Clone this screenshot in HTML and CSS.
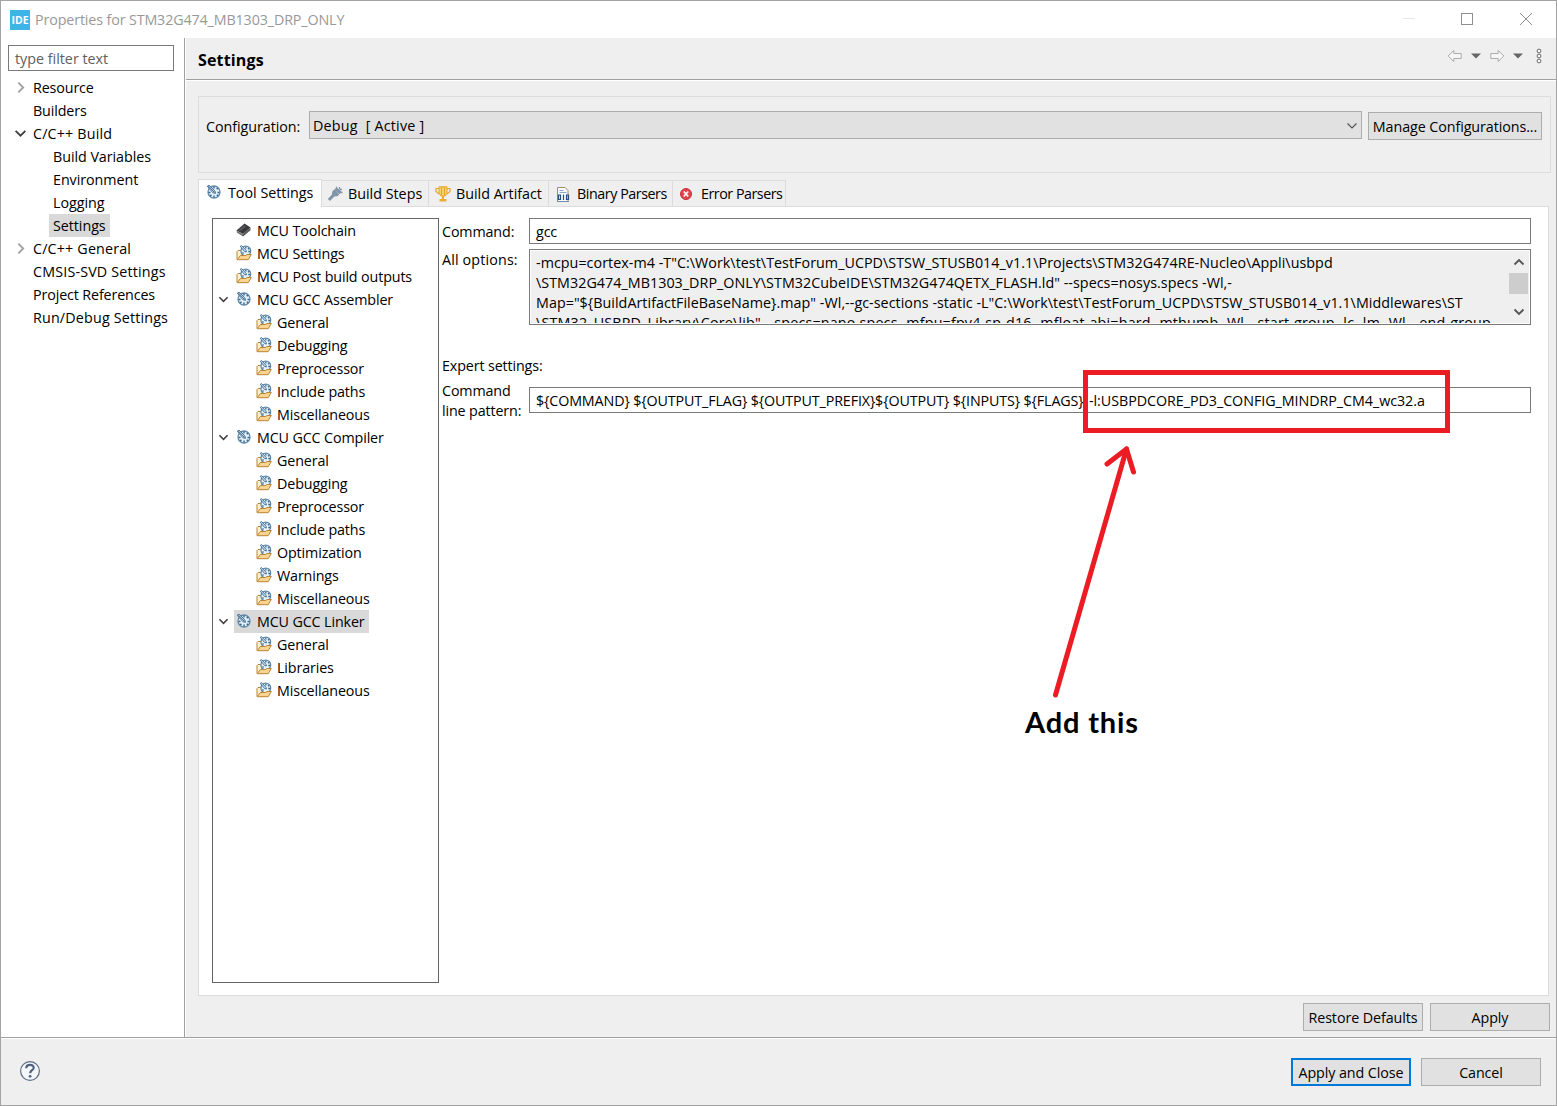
FILE: index.html
```html
<!DOCTYPE html>
<html lang="en">
<head>
    <meta charset="UTF-8">
    <title>Properties for STM32G474_MB1303_DRP_ONLY</title>
    <link rel="stylesheet" href="styles.css">
</head>
<body>
    <!-- shared icons -->
    <svg class="sprite" width="0" height="0">
        <symbol id="dial" viewBox="0 0 16 16">
            <circle cx="8" cy="8" r="6" fill="#e6f1f9" stroke="#6389ab" stroke-width="1.3"/>
            <path d="M8 2.500v2M8 11.500v2M2.500 8.500h2M11.500 8.500h2M4.200 12l1.300-1.300M10.800 10.800l1.300 1.200M10.700 5.300L12 4" stroke="#34668f" stroke-width="1.400"/>
            <path d="M1.300 2.200l5.500 6.500 2.700.7-.7-2.700L3 1.200z" fill="#dbe8f1" stroke="#34668f" stroke-width=".9"/>
            <path d="M2.500 2.200l6 6.200" stroke="#28517a" stroke-width=".9"/>
        </symbol>
        <symbol id="folder" viewBox="0 0 16 16">
            <path d="M1 14.500V6.500L2 5.500h2.500l1.500 1.600v2.400" fill="#fdf1cf" stroke="#b98535"/>
            <circle cx="9.800" cy="6" r="4.900" fill="#e6f1f9" stroke="#5b84a8" stroke-width="1.200"/>
            <path d="M9.800 2v1.500M12 4.200l1-1M12.300 6.500H14M6.500 8.500l1-1" stroke="#34668f" stroke-width="1.300"/>
            <path d="M4.300 1.300l4.300 5.200 1.800.5-.4-1.700L5.500.6z" fill="#dbe8f1" stroke="#34668f" stroke-width=".9"/>
            <path d="M1.200 14.700l3.200-4.200h5.100l1.500-1h4.300l-3.100 5.200z" fill="#fbd490" stroke="#b98535"/>
        </symbol>
        <symbol id="chip" viewBox="0 0 16 16">
            <path d="M.5 8.500L8.500 1.500l6 4L7 12z" fill="#39393b"/>
            <path d="M.5 8.500L7 12v2.500L1 10.800z" fill="#777"/>
            <path d="M7 12l7.500-6.500v2.800L7 14.500z" fill="#555"/>
            <path d="M2.500 8.300l6-5.100 1.600 1L4 9.300z" fill="#59595c"/>
        </symbol>
        <symbol id="open" viewBox="0 0 12 12"><path d="M1.500 3.500L6 8l4.500-4.500" fill="none" stroke="#404040" stroke-width="1.700"/></symbol>
        <symbol id="closed" viewBox="0 0 12 12"><path d="M4 1.500L8.500 6 4 10.500" fill="none" stroke="#a0a0a0" stroke-width="1.700"/></symbol>
        <symbol id="nav" viewBox="0 0 16 14"><path d="M1.200 7l5.600-5.600v3.100h7.400v5H6.800v3.100z" fill="#f6f6f6" stroke="#acacac"/></symbol>
    </svg>

    <div class="window">
        <div class="titlebar">
            <div class="app-icon">IDE</div>
            <div class="title">Properties for STM32G474_MB1303_DRP_ONLY</div>
            <svg class="controls" width="150" height="20" fill="none" stroke="#8f8f8f">
                <path d="M6 8.500h12" stroke="#e8e8e8"/>
                <rect x="64.500" y="3.500" width="11" height="11"/>
                <path d="M123 3l12 12M135 3l-12 12"/>
            </svg>
        </div>

        <div class="main">
            <div class="sidebar">
                <div class="filter">type filter text</div>
                <div class="nav-tree">
                    <div class="nav-row"><svg class="arrow"><use href="#closed"/></svg><span>Resource</span></div>
                    <div class="nav-row leaf"><span>Builders</span></div>
                    <div class="nav-row wide"><svg class="arrow"><use href="#open"/></svg><span>C/C++ Build</span></div>
                    <div class="nav-row sub"><span>Build Variables</span></div>
                    <div class="nav-row sub"><span>Environment</span></div>
                    <div class="nav-row sub"><span>Logging</span></div>
                    <div class="nav-row sub"><span class="selected">Settings</span></div>
                    <div class="nav-row wide"><svg class="arrow"><use href="#closed"/></svg><span>C/C++ General</span></div>
                    <div class="nav-row leaf wide"><span>CMSIS-SVD Settings</span></div>
                    <div class="nav-row leaf"><span>Project References</span></div>
                    <div class="nav-row leaf wide"><span>Run/Debug Settings</span></div>
                </div>
            </div>

            <div class="page">
                <div class="page-header">
                    <h1>Settings</h1>
                    <div class="history">
                        <svg width="16" height="14"><use href="#nav"/></svg>
                        <svg width="10" height="6"><path d="M0 .5h10L5 5.500z" fill="#666"/></svg>
                        <svg width="16" height="14" class="forward"><use href="#nav"/></svg>
                        <svg width="10" height="6"><path d="M0 .5h10L5 5.500z" fill="#666"/></svg>
                        <svg width="6" height="16" class="dots" fill="#fff" stroke="#666"><circle cx="3" cy="3" r="1.900"/><circle cx="3" cy="8" r="1.900"/><circle cx="3" cy="13" r="1.900"/></svg>
                    </div>
                </div>

                <div class="config">
                    <label>Configuration:</label>
                    <div class="combo"><span>Debug&nbsp; [ Active ]</span><svg width="12" height="12"><path d="M1.500 3.500L6 8l4.500-4.500" fill="none" stroke="#505050" stroke-width="1.100"/></svg></div>
                    <button class="btn manage">Manage Configurations...</button>
                </div>

                <div class="tabs">
                    <div class="tab active"><svg width="16" height="16"><use href="#dial"/></svg><span>Tool Settings</span></div>
                    <div class="tab steps">
                        <svg width="16" height="16"><path d="M.8 13l4-4.300.5-3.200 2-2 5 5-2 1.700-3 .3L3 15z" fill="#8095a8"/><path d="M7 3.500l3-1.700 4.500 4-2 2.500z" fill="#8095a8"/><path d="M9.500.8v2M12.500 1v2.500M15 3.500h-2M15.500 6.500h-2" stroke="#8095a8" stroke-width="1.300"/></svg>
                        <span>Build Steps</span>
                    </div>
                    <div class="tab artifact">
                        <svg width="16" height="16"><path d="M4 .8h8v6.500L10 10H6L4 7.300z" fill="#fbd56c" stroke="#e5a52c"/><path d="M4 2.500H1v3L4 8M12 2.500h3v3L12 8M6.500 1v8M9.500 1v8" fill="none" stroke="#e5a52c" stroke-width="1.200"/><path d="M7 10h2v3h2.500v2.500h-7V13H7z" fill="#e8ad38"/></svg>
                        <span>Build Artifact</span>
                    </div>
                    <div class="tab binary">
                        <svg width="16" height="16"><path d="M2.500 15V1.500h7.500l3 3V15" fill="#f7fbff" stroke="#9c8d5b"/><path d="M4.500 4.500h4M4.500 6.500h7" stroke="#87a6c7"/><path d="M3.500 9h2v4.500h-2zM8.500 8.500V14M11.500 9h2v4.500h-2z" fill="none" stroke="#294c7c" stroke-width="1.200"/><path d="M2 15.500h12" stroke="#718dad"/></svg>
                        <span>Binary Parsers</span>
                    </div>
                    <div class="tab error">
                        <svg width="16" height="16"><circle cx="8" cy="8" r="5.500" fill="#e2434c" stroke="#c9303c"/><path d="M5.800 5.500l4.400 5M10.200 5.500l-4.400 5" stroke="#fff" stroke-width="1.600"/></svg>
                        <span>Error Parsers</span>
                    </div>
                </div>

                <div class="tab-body">
                    <div class="tool-tree">
                        <div class="row"><svg class="icon"><use href="#chip"/></svg><span>MCU Toolchain</span></div>
                        <div class="row"><svg class="icon"><use href="#folder"/></svg><span>MCU Settings</span></div>
                        <div class="row"><svg class="icon"><use href="#folder"/></svg><span>MCU Post build outputs</span></div>
                        <div class="row group"><svg class="chev"><use href="#open"/></svg><div class="item"><svg class="icon"><use href="#dial"/></svg><span>MCU GCC Assembler</span></div></div>
                        <div class="row sub"><svg class="icon"><use href="#folder"/></svg><span>General</span></div>
                        <div class="row sub"><svg class="icon"><use href="#folder"/></svg><span>Debugging</span></div>
                        <div class="row sub"><svg class="icon"><use href="#folder"/></svg><span>Preprocessor</span></div>
                        <div class="row sub"><svg class="icon"><use href="#folder"/></svg><span>Include paths</span></div>
                        <div class="row sub"><svg class="icon"><use href="#folder"/></svg><span>Miscellaneous</span></div>
                        <div class="row group"><svg class="chev"><use href="#open"/></svg><div class="item"><svg class="icon"><use href="#dial"/></svg><span>MCU GCC Compiler</span></div></div>
                        <div class="row sub"><svg class="icon"><use href="#folder"/></svg><span>General</span></div>
                        <div class="row sub"><svg class="icon"><use href="#folder"/></svg><span>Debugging</span></div>
                        <div class="row sub"><svg class="icon"><use href="#folder"/></svg><span>Preprocessor</span></div>
                        <div class="row sub"><svg class="icon"><use href="#folder"/></svg><span>Include paths</span></div>
                        <div class="row sub"><svg class="icon"><use href="#folder"/></svg><span>Optimization</span></div>
                        <div class="row sub"><svg class="icon"><use href="#folder"/></svg><span>Warnings</span></div>
                        <div class="row sub"><svg class="icon"><use href="#folder"/></svg><span>Miscellaneous</span></div>
                        <div class="row group"><svg class="chev"><use href="#open"/></svg><div class="item selected"><svg class="icon"><use href="#dial"/></svg><span>MCU GCC Linker</span></div></div>
                        <div class="row sub"><svg class="icon"><use href="#folder"/></svg><span>General</span></div>
                        <div class="row sub"><svg class="icon"><use href="#folder"/></svg><span>Libraries</span></div>
                        <div class="row sub"><svg class="icon"><use href="#folder"/></svg><span>Miscellaneous</span></div>
                    </div>

                    <div class="form">
                        <div class="field command">
                            <label>Command:</label>
                            <div class="input">gcc</div>
                        </div>
                        <div class="field options">
                            <label>All options:</label>
                            <div class="textarea">
                                <div class="lines">
                                    <div>-mcpu=cortex-m4 -T"C:\Work\test\TestForum_UCPD\STSW_STUSB014_v1.1\Projects\STM32G474RE-Nucleo\Appli\usbpd</div>
                                    <div>\STM32G474_MB1303_DRP_ONLY\STM32CubeIDE\STM32G474QETX_FLASH.ld" --specs=nosys.specs -Wl,-</div>
                                    <div>Map="${BuildArtifactFileBaseName}.map" -Wl,--gc-sections -static -L"C:\Work\test\TestForum_UCPD\STSW_STUSB014_v1.1\Middlewares\ST</div>
                                    <div class="last">\STM32_USBPD_Library\Core\lib" --specs=nano.specs -mfpu=fpv4-sp-d16 -mfloat-abi=hard -mthumb -Wl,--start-group -lc -lm -Wl,--end-group</div>
                                </div>
                                <div class="scrollbar">
                                    <svg width="12" height="12"><path d="M1.500 8.500L6 4l4.500 4.500" fill="none" stroke="#555" stroke-width="1.800"/></svg>
                                    <div class="thumb"></div>
                                    <svg width="12" height="12"><path d="M1.500 3.500L6 8l4.500-4.500" fill="none" stroke="#555" stroke-width="1.800"/></svg>
                                </div>
                            </div>
                        </div>
                        <div class="expert">Expert settings:</div>
                        <div class="field pattern">
                            <label>Command<br>line pattern:</label>
                            <div class="input"><span class="cmd">${COMMAND} ${OUTPUT_FLAG} ${OUTPUT_PREFIX}${OUTPUT} ${INPUTS} ${FLAGS}</span><span class="lib">-l:USBPDCORE_PD3_CONFIG_MINDRP_CM4_wc32.a</span></div>
                        </div>
                    </div>
                </div>

                <div class="page-buttons">
                    <button class="btn">Restore Defaults</button>
                    <button class="btn">Apply</button>
                </div>
            </div>
        </div>

        <div class="footer">
            <svg width="22" height="22"><circle cx="11" cy="11" r="9.400" fill="#f4f7f9" stroke="#5c6b85" stroke-width="1.200"/><path d="M7.200 8.200c.2-4.600 7.800-4.300 7.500-.2-.2 2.300-3.500 2.300-3.500 5.200" fill="none" stroke="#50607d" stroke-width="2.200"/><circle cx="11.100" cy="16.300" r="1.400" fill="#50607d"/></svg>
            <div class="footer-buttons">
                <button class="btn default">Apply and Close</button>
                <button class="btn">Cancel</button>
            </div>
        </div>
    </div>

    <!-- red markup on top of the dialog -->
    <div class="mark-box"></div>
    <svg class="mark-arrow" width="90" height="260" fill="none" stroke="#ec1c24" stroke-width="5" stroke-linecap="round" stroke-linejoin="round">
        <path d="M15.500 255L86.500 9"/>
        <path d="M67 24L86.500 9l7 23"/>
    </svg>
    <div class="mark-text">Add this</div>
</body>
</html>
```
FILE: styles.css
```css
* {
    box-sizing: border-box;
}
body {
    margin: 0;
    font-family: "Open Sans", "Noto Sans", sans-serif;
    font-size: 14.3px;
    letter-spacing: -0.13px;
    line-height: 20px;
    color: #000;
    white-space: nowrap;
    overflow: hidden;
}
svg {
    display: block;
    flex: none;
}
.sprite {
    position: absolute;
}
.window {
    width: 1557px;
    height: 1106px;
    border: 1px solid #a3a3a3;
    background: #efefef;
    display: flex;
    flex-direction: column;
}

/* title bar */
.titlebar {
    height: 37px;
    flex: none;
    background: #fff;
    display: flex;
    align-items: center;
    padding-left: 9px;
}
.app-icon {
    width: 20px;
    height: 20px;
    background: #3cb4e5;
    color: #fff;
    font-size: 10.5px;
    font-weight: bold;
    letter-spacing: 0;
    text-align: center;
}
.title {
    margin-left: 5px;
    color: #999;
}
.controls {
    margin-left: auto;
    margin-right: 9px;
}

/* left side */
.main {
    flex: 1;
    display: flex;
    min-height: 0;
    border-bottom: 1px solid #a0a0a0;
}
.sidebar {
    width: 184px;
    flex: none;
    background: #fff;
    border-right: 1px solid #a0a0a0;
    padding: 7px 10px 0 7px;
}
.filter {
    height: 26px;
    border: 1px solid #7a7a7a;
    padding: 3px 6px;
    color: #606060;
    letter-spacing: 0;
}
.nav-tree {
    padding-top: 5px;
}
.nav-row {
    height: 23px;
    display: flex;
    align-items: center;
    padding-left: 6px;
}
.nav-row.leaf {
    padding-left: 25px;
}
.nav-row.sub {
    padding-left: 41px;
    letter-spacing: -0.05px;
}
.nav-row.wide {
    letter-spacing: 0.17px;
}
.nav-row .arrow {
    width: 13px;
    height: 13px;
    margin-right: 6px;
}
.nav-row.sub span {
    padding: 2px 4px 1px;
}
.selected {
    background: #d9d9d9;
}

/* right side */
.page {
    flex: 1;
    min-width: 0;
    border-left: 1px solid #fff;
    display: flex;
    flex-direction: column;
}
.page-header {
    height: 42px;
    flex: none;
    display: flex;
    align-items: center;
    justify-content: space-between;
    padding: 0 14px 0 12px;
    border-bottom: 1px solid #a0a0a0;
    box-shadow: 0 1px #fff;
}
h1 {
    margin: 2px 0 0;
    font-size: 16px;
    letter-spacing: 0.15px;
}
.history {
    display: flex;
    align-items: center;
    gap: 8px;
    margin-top: -5px;
}
.forward {
    transform: scaleX(-1);
}
.dots {
    margin-left: 5px;
}
.config {
    height: 77px;
    flex: none;
    margin: 16px 5px 0 12px;
    border: 1px solid #dcdcdc;
    display: flex;
    padding: 14px 8px 0 7px;
}
.config label {
    width: 103px;
    margin-top: 6px;
    letter-spacing: -0.05px;
}
.combo {
    width: 1053px;
    height: 28px;
    background: #e1e1e1;
    border: 1px solid #adadad;
    display: flex;
    align-items: center;
    justify-content: space-between;
    padding: 1px 3px 0;
    letter-spacing: 0.22px;
}
.btn {
    width: 120px;
    height: 28px;
    padding: 1px 0 0;
    border: 1px solid #adadad;
    background: #e1e1e1;
    font: inherit;
    letter-spacing: -0.08px;
    color: #000;
}
.manage {
    width: 174px;
    margin: 1px 0 0 6px;
}
.tabs {
    height: 27px;
    flex: none;
    margin: 6px 0 0 12px;
    display: flex;
    align-items: flex-end;
    letter-spacing: 0;
}
.tab {
    height: 26px;
    border: 1px solid #dcdcdc;
    border-left: none;
    border-bottom: none;
    display: flex;
    align-items: center;
    gap: 5px;
    padding-left: 5px;
}
.tab span {
    padding-top: 1px;
}
.tab.active {
    width: 124px;
    height: 28px;
    margin-bottom: -1px;
    border-left: 1px solid #dcdcdc;
    background: #fff;
    padding: 0 0 3px 7px;
    position: relative;
    gap: 6px;
}
.tab.steps {
    width: 107px;
}
.tab.artifact {
    width: 120px;
    padding-left: 6px;
}
.tab.binary {
    width: 124px;
    padding-left: 6px;
    gap: 6px;
    letter-spacing: -0.45px;
}
.tab.error {
    width: 113px;
    gap: 7px;
    letter-spacing: -0.48px;
}
.tab-body {
    height: 790px;
    flex: none;
    margin: 0 7px 0 12px;
    border: 1px solid #dcdcdc;
    background: #fff;
    display: flex;
    padding: 11px 17px 12px 13px;
}
.tool-tree {
    width: 227px;
    height: 765px;
    flex: none;
    border: 1px solid #646464;
}
.row {
    height: 23px;
    display: flex;
    align-items: center;
    padding-left: 23px;
}
.row.sub {
    padding-left: 43px;
}
.row.group {
    padding-left: 5px;
}
.chev {
    width: 11px;
    height: 11px;
    margin-right: 5px;
}
.icon {
    width: 16px;
    height: 16px;
    margin: 0 5px 1px 0;
}
.item {
    height: 23px;
    display: flex;
    align-items: center;
    padding: 0 4px 0 2px;
}

/* linker form */
.form {
    flex: 1;
    min-width: 0;
    padding-left: 3px;
}
.field {
    display: flex;
}
.field label {
    width: 87px;
    flex: none;
}
.command label {
    margin-top: 4px;
}
.input {
    flex: 1;
    height: 26px;
    border: 1px solid #7a7a7a;
    padding: 3px 6px;
    display: flex;
}
.options {
    margin-top: 5px;
}
.options label {
    margin-top: 1px;
    letter-spacing: 0.15px;
}
.textarea {
    flex: 1;
    min-width: 0;
    height: 76px;
    border: 1px solid #7a7a7a;
    background: #efefef;
    box-shadow: inset 0 0 0 1px #fff;
    display: flex;
    justify-content: space-between;
    padding: 2px 2px 2px 6px;
}
.lines {
    height: 71px;
    padding-top: 1px;
    overflow: hidden;
    letter-spacing: 0.04px;
}
.lines .last {
    letter-spacing: 0.18px;
}
.scrollbar {
    width: 19px;
    height: 70px;
    display: flex;
    flex-direction: column;
    align-items: center;
    padding: 4px 0;
}
.thumb {
    width: 19px;
    height: 23px;
    margin: 5px 0 12px;
    background: #cdcdcd;
}
.expert {
    margin-top: 31px;
}
.pattern {
    margin-top: 5px;
}
.pattern .input {
    margin-top: 6px;
}
.cmd {
    width: 553px;
}
.lib {
    letter-spacing: -0.05px;
}
.page-buttons {
    display: flex;
    justify-content: flex-end;
    gap: 7px;
    margin: 7px 6px 0 0;
}

/* bottom bar */
.footer {
    height: 67px;
    flex: none;
    border-top: 1px solid #fff;
    display: flex;
    align-items: center;
    justify-content: space-between;
    padding: 0 15px 2px 18px;
}
.footer-buttons {
    display: flex;
    gap: 10px;
    margin-top: 2px;
}
.btn.default {
    border: 2px solid #0078d7;
}

/* markup */
.mark-box {
    position: absolute;
    left: 1083px;
    top: 370px;
    width: 367px;
    height: 63px;
    border: 5px solid #ec1c24;
}
.mark-arrow {
    position: absolute;
    left: 1040px;
    top: 440px;
    overflow: visible;
}
.mark-text {
    position: absolute;
    left: 1025px;
    top: 704px;
    font-family: Lato, sans-serif;
    font-size: 29px;
    font-weight: bold;
    line-height: 36px;
    letter-spacing: 0.85px;
}
```
